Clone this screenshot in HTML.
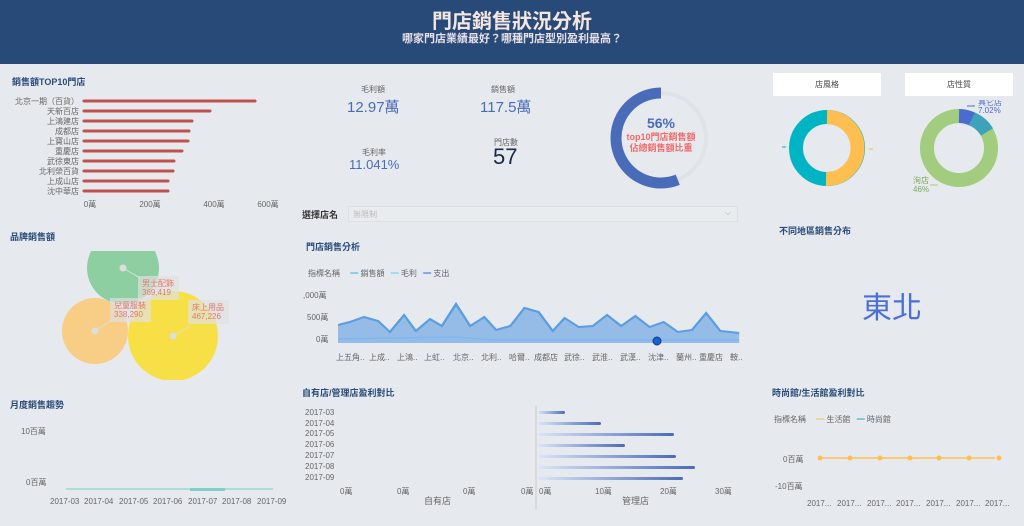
<!DOCTYPE html>
<html><head><meta charset="utf-8"><style>
*{margin:0;padding:0;box-sizing:border-box}
body{width:1024px;height:526px;background:#e6eaee;font-family:"Liberation Sans","Noto Sans CJK TC",sans-serif;position:relative;overflow:hidden;color:#555}
.a{position:absolute;white-space:nowrap}
.t{font-size:9px;font-weight:bold;color:#2b4a7a}
.s{font-size:8px;color:#666}
</style></head><body>
<div class="a" style="left:0;top:0;width:1024px;height:64px;background:#284a78"></div>
<div class="a" style="left:0;top:5px;width:1024px;text-align:center;font-size:20px;font-weight:bold;color:#f5e6e0">門店銷售狀況分析</div>
<div class="a" style="left:0;top:30px;width:1024px;text-align:center;font-size:11px;font-weight:bold;color:#e8e0e8">哪家門店業績最好？哪種門店型別盈利最高？</div>

<div class="a t" style="left:12px;top:75px">銷售額TOP10門店</div>
<svg class="a" style="left:0;top:90px" width="300" height="120">
<g stroke="#c0504d" stroke-width="3" stroke-linecap="round">
<line x1="84" y1="11" x2="255" y2="11"/><line x1="84" y1="21" x2="210" y2="21"/><line x1="84" y1="31" x2="192" y2="31"/><line x1="84" y1="41" x2="189" y2="41"/><line x1="84" y1="51" x2="188" y2="51"/><line x1="84" y1="61" x2="182" y2="61"/><line x1="84" y1="71" x2="174" y2="71"/><line x1="84" y1="81" x2="173" y2="81"/><line x1="84" y1="91" x2="168" y2="91"/><line x1="84" y1="101" x2="168" y2="101"/></g>
<g font-size="8" fill="#666" text-anchor="end"><text x="79" y="14">北京一期（百貨）</text><text x="79" y="24">天新百店</text><text x="79" y="34">上鴻建店</text><text x="79" y="44">成都店</text><text x="79" y="54">上寶山店</text><text x="79" y="64">重慶店</text><text x="79" y="74">武徐東店</text><text x="79" y="84">北利榮百貨</text><text x="79" y="94">上成山店</text><text x="79" y="104">沈中華店</text></g>
<g font-size="8" fill="#666" text-anchor="middle"><text x="90" y="117">0萬</text><text x="150" y="117">200萬</text><text x="214" y="117">400萬</text><text x="268" y="117">600萬</text></g>
</svg>

<div class="a s" style="left:361px;top:84px;width:24px;text-align:center">毛利額</div>
<div class="a" style="left:347px;top:96px;font-size:15px;color:#4a6bb8">12.97萬</div>
<div class="a s" style="left:491px;top:84px">銷售額</div>
<div class="a" style="left:480px;top:96px;font-size:15px;color:#4a6bb8">117.5萬</div>
<div class="a s" style="left:362px;top:147px">毛利率</div>
<div class="a" style="left:349px;top:157px;font-size:13px;color:#4a6bb8">11.041%</div>
<div class="a s" style="left:494px;top:137px">門店數</div>
<div class="a" style="left:493px;top:144px;font-size:22px;color:#1a2a44">57</div>
<svg class="a" style="left:605px;top:82px" width="112" height="112">
<circle cx="56" cy="56" r="45" fill="none" stroke="#dfe3e8" stroke-width="4"/>
<circle cx="56" cy="56" r="45" fill="none" stroke="#4a6bb8" stroke-width="11" stroke-dasharray="158.3 300" transform="rotate(-90 56 56) scale(1 -1) translate(0 -112)"/>
</svg>
<div class="a" style="left:610px;top:115px;width:102px;text-align:center;font-size:14px;font-weight:bold;color:#4a6bb8">56%</div>
<div class="a" style="left:610px;top:132px;width:102px;text-align:center;font-size:9px;font-weight:bold;color:#f06a6a;line-height:11px">top10門店銷售額<br>佔總銷售額比重</div>

<div class="a" style="left:773px;top:73px;width:108px;height:23px;background:#fff;text-align:center;font-size:8px;line-height:23px;color:#444">店風格</div>
<div class="a" style="left:905px;top:73px;width:108px;height:23px;background:#fff;text-align:center;font-size:8px;line-height:23px;color:#444">店性質</div>
<svg class="a" style="left:760px;top:100px" width="264" height="100">
<circle cx="67" cy="48" r="31" fill="none" stroke="#00b4c4" stroke-width="14"/>
<path d="M67 17 A31 31 0 0 1 66 79" fill="none" stroke="#ffbf50" stroke-width="14"/>
<line x1="22" y1="47" x2="26" y2="47" stroke="#00b4c4"/><line x1="109" y1="49" x2="113" y2="49" stroke="#ffbf50"/>
<circle cx="199" cy="48" r="32" fill="none" stroke="#a2cc7e" stroke-width="14"/>
<path d="M199 16 A32 32 0 0 1 212 19" fill="none" stroke="#4a6bd0" stroke-width="14"/>
<path d="M212 19 A32 32 0 0 1 227 32" fill="none" stroke="#3ea3b8" stroke-width="14"/>
<line x1="207" y1="6" x2="215" y2="6" stroke="#4a6bd0"/>
<line x1="170" y1="85" x2="178" y2="85" stroke="#a2cc7e"/>
<text x="218" y="5" font-size="8" fill="#4a6bd0">具它店</text><text x="218" y="13" font-size="8" fill="#4a6bd0">7.02%</text>
<text x="153" y="83" font-size="8" fill="#7aa858">洵店</text><text x="153" y="92" font-size="8" fill="#7aa858">46%</text>
</svg>

<div class="a" style="left:302px;top:208px;font-size:9px;font-weight:bold;color:#333">選擇店名</div>
<div class="a" style="left:348px;top:206px;width:390px;height:16px;border:1px solid #dde1e5;background:#e8ecef;font-size:8px;color:#bbb;padding:2px 4px">無限制<span style="position:absolute;right:6px;top:1px;color:#aaa">⌵</span></div>

<div class="a t" style="left:306px;top:240px">門店銷售分析</div>
<div class="a s" style="left:308px;top:268px">指標名稱 <span style="color:#2eaee8;margin-left:8px">━</span> 銷售額 <span style="color:#5ac8f0;margin-left:4px">━</span> 毛利 <span style="color:#2f5fd8;margin-left:4px">━</span> 支出</div>
<div class="a s" style="left:303px;top:290px">,000萬</div>
<div class="a s" style="left:307px;top:312px">500萬</div>
<div class="a s" style="left:316px;top:334px">0萬</div>
<svg class="a" style="left:338px;top:295px" width="404" height="55">
<g transform="translate(0 12) scale(1.18 1)">
<polygon fill="#8cb6e6" opacity=".9" points="0,36 0,18 10,15 22,10 34,14 44,25 56,8 66,24 78,12 88,19 100,-3 112,19 124,10 134,23 146,19 158,1 170,5 182,24 192,11 204,20 216,19 228,8 240,19 252,9 264,20 276,15 288,25 300,23 312,6 324,24 340,26 340,36"/>
<polyline fill="none" stroke="#5a9de0" stroke-width="2" points="0,18 10,15 22,10 34,14 44,25 56,8 66,24 78,12 88,19 100,-3 112,19 124,10 134,23 146,19 158,1 170,5 182,24 192,11 204,20 216,19 228,8 240,19 252,9 264,20 276,15 288,25 300,23 312,6 324,24 340,26"/>
<polyline fill="none" stroke="#7fb8ee" stroke-width="1.5" points="0,32 100,30 130,33 340,33"/>
</g>
<circle cx="319" cy="46" r="4" fill="#1a5fd8" stroke="#1a3c88"/>
</svg>
<svg class="a" style="left:336px;top:350px" width="410" height="14"><g font-size="8" fill="#666">
<text x="0" y="10">上五角..</text><text x="33" y="10">上成..</text><text x="61" y="10">上鴻..</text><text x="88" y="10">上虹..</text><text x="117" y="10">北京..</text><text x="145" y="10">北利..</text><text x="173" y="10">哈爾..</text><text x="198" y="10">成都店</text><text x="228" y="10">武徐..</text><text x="256" y="10">武淮..</text><text x="284" y="10">武漢..</text><text x="312" y="10">沈津..</text><text x="340" y="10">蘭州..</text><text x="363" y="10">重慶店</text><text x="394" y="10">鞍..</text></g></svg>

<div class="a t" style="left:779px;top:224px">不同地區銷售分布</div>
<div class="a" style="left:862px;top:283px;font-size:30px;color:#4c6fd6">東北</div>

<div class="a t" style="left:10px;top:230px">品牌銷售額</div>
<svg class="a" style="left:0;top:250px" width="300" height="130">
<defs><clipPath id="c"><rect x="0" y="1" width="300" height="130"/></clipPath></defs>
<g clip-path="url(#c)">
<circle cx="123" cy="18" r="36" fill="#8ecfa2"/>
<circle cx="95" cy="81" r="33" fill="#f8cd86"/>
<circle cx="173" cy="86" r="45" fill="#f7df46"/>
</g>
<g stroke="#ddd" fill="#ddd"><line x1="123" y1="18" x2="140" y2="28"/><circle cx="123" cy="18" r="3"/><line x1="95" y1="81" x2="112" y2="70"/><circle cx="95" cy="81" r="3"/><line x1="173" y1="86" x2="190" y2="76"/><circle cx="173" cy="86" r="3"/></g>
<rect x="138" y="26" width="41" height="24" fill="#e0e0e0" opacity=".7"/>
<rect x="110" y="48" width="41" height="24" fill="#e0e0e0" opacity=".7"/>
<rect x="188" y="50" width="41" height="24" fill="#e0e0e0" opacity=".7"/>
<g font-size="8" fill="#e07a6a"><text x="142" y="36">男士配飾</text><text x="142" y="45">369,419</text><text x="114" y="58">兒童服裝</text><text x="114" y="67">338,290</text><text x="192" y="60">床上用品</text><text x="192" y="69">467,226</text></g>
</svg>

<div class="a t" style="left:10px;top:398px">月度銷售趨勢</div>
<div class="a s" style="left:21px;top:426px">10百萬</div>
<div class="a s" style="left:26px;top:477px">0百萬</div>
<div class="a" style="left:66px;top:488px;width:207px;height:2px;background:#a8ddd8"></div>
<div class="a" style="left:190px;top:488px;width:35px;height:3px;background:#7fcfc6"></div>
<svg class="a" style="left:48px;top:494px" width="250" height="14"><g font-size="8" fill="#666"><text x="2" y="10">2017-03</text><text x="36" y="10">2017-04</text><text x="71" y="10">2017-05</text><text x="105" y="10">2017-06</text><text x="140" y="10">2017-07</text><text x="174" y="10">2017-08</text><text x="209" y="10">2017-09</text></g></svg>

<div class="a t" style="left:302px;top:386px">自有店/管理店盈利對比</div>
<svg class="a" style="left:300px;top:402px" width="460" height="112">
<defs><linearGradient id="g"><stop offset="0" stop-color="#dbe5f8"/><stop offset="1" stop-color="#4a6bb8"/></linearGradient></defs>
<g font-size="8" fill="#666"><text x="5" y="13">2017-03</text><text x="5" y="24">2017-04</text><text x="5" y="34">2017-05</text><text x="5" y="45">2017-06</text><text x="5" y="56">2017-07</text><text x="5" y="67">2017-08</text><text x="5" y="78">2017-09</text>
<text x="40" y="92">0萬</text><text x="97" y="92">0萬</text><text x="163" y="92">0萬</text><text x="221" y="92">0萬</text><text x="239" y="92">0萬</text><text x="295" y="92">10萬</text><text x="360" y="92">20萬</text><text x="415" y="92">30萬</text>
<text x="124" y="102" font-size="9">自有店</text><text x="322" y="102" font-size="9">管理店</text></g>
<line x1="236" y1="4" x2="236" y2="108" stroke="#ccc"/>
<g fill="url(#g)"><rect x="238" y="9" width="27" height="3" rx="1.5"/><rect x="238" y="20" width="63" height="3" rx="1.5"/><rect x="238" y="31" width="136" height="3" rx="1.5"/><rect x="238" y="42" width="87" height="3" rx="1.5"/><rect x="238" y="53" width="138" height="3" rx="1.5"/><rect x="238" y="64" width="157" height="3" rx="1.5"/><rect x="238" y="75" width="145" height="3" rx="1.5"/></g>
</svg>

<div class="a t" style="left:772px;top:386px">時尚館/生活館盈利對比</div>
<div class="a s" style="left:774px;top:414px">指標名稱 <span style="color:#f8b84a;margin-left:8px">━</span> 生活館 <span style="color:#1aa8c8;margin-left:4px">━</span> 時尚館</div>
<div class="a s" style="left:783px;top:454px">0百萬</div>
<div class="a s" style="left:775px;top:481px">-10百萬</div>
<svg class="a" style="left:815px;top:452px" width="190" height="12"><polyline fill="none" stroke="#ffbf50" stroke-width="1.5" points="5,6 180,6"/><g fill="#ffbf50"><circle cx="5" cy="6" r="2.5"/><circle cx="35" cy="6" r="2.5"/><circle cx="65" cy="6" r="2.5"/><circle cx="95" cy="6" r="2.5"/><circle cx="124" cy="6" r="2.5"/><circle cx="154" cy="6" r="2.5"/><circle cx="184" cy="6" r="2.5"/></g></svg>
<svg class="a" style="left:805px;top:496px" width="219" height="14"><g font-size="8" fill="#666"><text x="2" y="10">2017...</text><text x="32" y="10">2017...</text><text x="62" y="10">2017...</text><text x="91" y="10">2017...</text><text x="121" y="10">2017...</text><text x="151" y="10">2017...</text><text x="180" y="10">2017...</text></g></svg>
</body></html>
